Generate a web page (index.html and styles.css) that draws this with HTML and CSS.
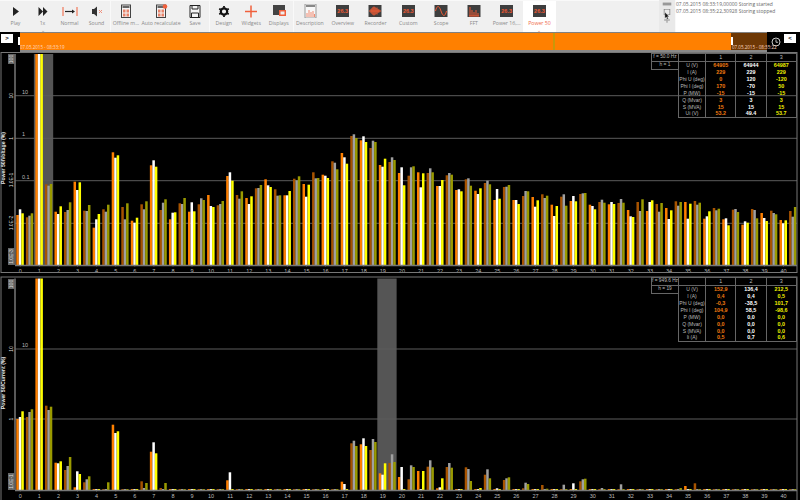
FILE: index.html
```html
<!DOCTYPE html>
<html lang="en">
<head>
<meta charset="utf-8">
<title>Power 50</title>
<link rel="stylesheet" href="styles.css">
</head>
<body>
<div class="toolbar">
  <div class="group">
    <div class="tool t27"><svg class="icon" viewBox="0 0 16 14"><path d="M5 3l6 4.500-6 4.500z" fill="#222"/></svg><span>Play</span></div>
    <div class="tool t27"><svg class="icon" viewBox="0 0 16 14"><path d="M3.500 3l4.500 4.500-4.500 4.500zM8 3l4.500 4.500L8 12z" fill="#222"/></svg><span>1x</span><i class="caret">⌄</i></div>
    <div class="tool t27"><svg class="icon" viewBox="0 0 16 14"><path d="M1 3v9M15 3v9" stroke="#f0603c" fill="none"/><path d="M3 7.500h8" stroke="#222" stroke-width="1.200"/><path d="M10 5.500l3 2-3 2z" fill="#222"/></svg><span>Normal</span></div>
    <div class="tool t27"><svg class="icon" viewBox="0 0 16 14"><path d="M3 5h2l3-2.500v10L5 10H3z" fill="#333"/><path d="M10 6l3 3M13 6l-3 3" stroke="#f0907c" fill="none"/></svg><span>Sound</span></div>
  </div>
  <div class="group">
    <div class="tool t30"><svg class="icon" viewBox="0 0 16 14"><rect x="3.500" y="1" width="9" height="12.500" fill="#f4f4f4" stroke="#444"/><path d="M4.500 2h7v2h-7z" fill="#666"/><path d="M5 5.500h2.500v3H5zM8.500 5.500H11v3H8.500zM5 9.500h2.500v3H5zM8.500 9.500H11v3H8.500z" fill="#e8836a"/></svg><span>Offline m...</span></div>
    <div class="tool t40"><svg class="icon" viewBox="0 0 16 14"><rect x="3.500" y="1" width="9" height="12.500" fill="#f4f4f4" stroke="#444"/><path d="M4.500 2h7v2h-7z" fill="#666"/><path d="M5 5.500h2.500v3H5zM8.500 5.500H11v3H8.500zM5 9.500h2.500v3H5zM8.500 9.500H11v3H8.500z" fill="#e8836a"/><circle cx="12" cy="2.500" r="2.300" fill="#f0603c"/></svg><span>Auto recalculate</span></div>
    <div class="tool t28"><svg class="icon" viewBox="0 0 16 14"><path d="M3 1.500h10v12H3z" fill="#f4f4f4" stroke="#222"/><path d="M5 1.500v3.500h6V1.500M4.500 13.500V9h7v4.500" fill="none" stroke="#222"/></svg><span>Save</span></div>
  </div>
  <div class="group">
    <div class="tool t275"><svg class="icon" viewBox="0 0 16 14"><circle cx="8" cy="7.500" r="3.200" fill="none" stroke="#111" stroke-width="2.200"/><path d="M8 2v11M3.200 4.750l9.600 5.500M12.800 4.750l-9.600 5.500" stroke="#111" stroke-width="1.800" stroke-dasharray="1.800 7.400"/></svg><span>Design</span></div>
    <div class="tool t275"><svg class="icon" viewBox="0 0 16 14"><path d="M8 1.500v12M2 7.500h12" stroke="#f0603c" stroke-width="1.500"/></svg><span>Widgets</span></div>
    <div class="tool t275"><svg class="icon" viewBox="0 0 16 14"><rect x="2" y="1" width="12" height="10" fill="#444"/><rect x="8" y="6" width="7" height="6" fill="#f0603c"/><rect x="9.500" y="7.500" width="4" height="3" fill="#eee"/></svg><span>Displays</span></div>
  </div>
  <div class="group grow">
    <div class="tool t327"><svg class="icon" viewBox="0 0 16 14"><rect x="3" y="0" width="11" height="14" fill="#f8f8f8" stroke="#999"/><rect x="4" y="1" width="9" height="2" fill="#888"/><path d="M5 13V9M7 13V6M9 13V8M11 13V7M12.500 13v-3" stroke="#f08a70"/></svg><span>Description</span></div>
    <div class="tool t327"><div class="lcd">26.3</div><span>Overview</span></div>
    <div class="tool t327"><svg class="icon" viewBox="0 0 16 14"><rect x="1.500" y="1" width="13" height="12" fill="#3e3e3e"/><path d="M2 7h12M4 5v4M5 4v6M6 3v8M7 2.500v9M8 3v8M9 4v6M10 3.500v7M11 5v4M12 5.500v3" stroke="#ee5a35"/></svg><span>Recorder</span></div>
    <div class="tool t327"><div class="lcd">26.3</div><span>Custom</span></div>
    <div class="tool t327"><svg class="icon" viewBox="0 0 16 14"><rect x="1.500" y="1" width="13" height="12" fill="#3e3e3e"/><path d="M2.500 7C4 1 6 1 8 7s4 6 5.500 0" fill="none" stroke="#ee5a35"/></svg><span>Scope</span></div>
    <div class="tool t327"><svg class="icon" viewBox="0 0 16 14"><rect x="1.500" y="1" width="13" height="12" fill="#3e3e3e"/><path d="M3 12h10M4 12V3M6 12V6M8 12V8M10 12V6M12 12V9" stroke="#ee5a35"/></svg><span>FFT</span></div>
    <div class="tool t327"><div class="lcd">26.3</div><span>Power 16,...</span></div>
    <div class="tool t327 active"><div class="lcd">26.3</div><span>Power 50</span><i class="caret">⌄</i></div>
  </div>
  <div class="side-icons">
    <svg class="side-icon" viewBox="0 0 14 6"><rect x="1" y="1" width="12" height="4" fill="#999"/></svg>
    <svg class="side-icon" viewBox="0 0 14 8"><rect x="3" y="0" width="8" height="8" fill="none" stroke="#777"/></svg>
    <svg class="side-icon" viewBox="0 0 14 8"><path d="M7 0v8M3 4h8" stroke="#aaa" stroke-width="2"/></svg>
  </div>
  <div class="log">
    <div>07.05.2015 08:33:19,00000 Storing started</div>
    <div>07.05.2015 08:35:22,30928 Storing stopped</div>
  </div>
</div>

<svg class="cursor" viewBox="0 0 8 11"><path d="M1 0v9l2-2 1.500 3 1.500-.7L4.500 6.500H7z" fill="#111" stroke="#fff" stroke-width=".5"/></svg>

<div class="timeline">
  <div class="nav-slot"><div class="nav-btn">&gt;</div></div>
  <div class="range">
    <span class="handle"></span>
    <span class="range-label">07.05.2015 - 08:33:19</span>
    <span class="marker"></span>
  </div>
  <div class="rest">
    <span class="handle"></span>
    <span class="rest-label">07.05.2015 - 08:35:22</span>
  </div>
  <div class="clock-slot">
    <svg class="clock" viewBox="0 0 12 12"><circle cx="6" cy="6" r="4.800" fill="none" stroke="#ddd" stroke-width="1.100"/><path d="M6 3v3.300h2.500" fill="none" stroke="#ddd"/></svg>
    <div class="nav-btn">&lt;</div>
  </div>
</div>

<div class="panel">
  <svg id="chart1" class="chart" viewBox="0 52 800 224"></svg>
  <table class="info">
    <tr class="head"><th class="key">f = 50.0 Hz</th><th class="blank"></th><th>1</th><th>2</th><th>3</th></tr>
    <tr><th class="key">h = 1</th><td class="name">U (V)</td><td class="p1">64905</td><td class="p2">64944</td><td class="p3">64987</td></tr>
    <tr><th class="none"></th><td class="name">I (A)</td><td class="p1">229</td><td class="p2">229</td><td class="p3">229</td></tr>
    <tr><th class="none"></th><td class="name">Phi U (deg)</td><td class="p1">0</td><td class="p2">120</td><td class="p3">-120</td></tr>
    <tr><th class="none"></th><td class="name">Phi I (deg)</td><td class="p1">170</td><td class="p2">-70</td><td class="p3">50</td></tr>
    <tr><th class="none"></th><td class="name">P (MW)</td><td class="p1">-15</td><td class="p2">-15</td><td class="p3">-15</td></tr>
    <tr><th class="none"></th><td class="name">Q (Mvar)</td><td class="p1">3</td><td class="p2">3</td><td class="p3">3</td></tr>
    <tr><th class="none"></th><td class="name">S (MVA)</td><td class="p1">15</td><td class="p2">15</td><td class="p3">15</td></tr>
    <tr class="last"><th class="none"></th><td class="name">Ui (V)</td><td class="p1">53.2</td><td class="p2">49.4</td><td class="p3">53.7</td></tr>
  </table>
</div>

<div class="panel">
  <svg id="chart2" class="chart" viewBox="0 276 800 224"></svg>
  <table class="info">
    <tr class="head"><th class="key">f = 949.6 Hz</th><th class="blank"></th><th>1</th><th>2</th><th>3</th></tr>
    <tr><th class="key">h = 19</th><td class="name">U (V)</td><td class="p1">152,9</td><td class="p2">136,4</td><td class="p3">212,5</td></tr>
    <tr><th class="none"></th><td class="name">I (A)</td><td class="p1">0,4</td><td class="p2">0,4</td><td class="p3">0,5</td></tr>
    <tr><th class="none"></th><td class="name">Phi U (deg)</td><td class="p1">-0,3</td><td class="p2">-38,5</td><td class="p3">101,7</td></tr>
    <tr><th class="none"></th><td class="name">Phi I (deg)</td><td class="p1">104,9</td><td class="p2">58,5</td><td class="p3">-98,6</td></tr>
    <tr><th class="none"></th><td class="name">P (MW)</td><td class="p1">0,0</td><td class="p2">0,0</td><td class="p3">0,0</td></tr>
    <tr><th class="none"></th><td class="name">Q (Mvar)</td><td class="p1">0,0</td><td class="p2">0,0</td><td class="p3">0,0</td></tr>
    <tr><th class="none"></th><td class="name">S (MVA)</td><td class="p1">0,0</td><td class="p2">0,0</td><td class="p3">0,0</td></tr>
    <tr class="last"><th class="none"></th><td class="name">Ii (A)</td><td class="p1">0,5</td><td class="p2">0,7</td><td class="p3">0,6</td></tr>
  </table>
</div>
<script src="chart.js"></script>
</body>
</html>
```
FILE: styles.css
```css
html, body { margin: 0; padding: 0; }
body {
  width: 800px; height: 500px; overflow: hidden; background: #000;
  font-family: "Open Sans", "Liberation Sans", sans-serif;
  display: flex; flex-direction: column; position: relative;
}
.toolbar { height: 32px; display: flex; background: #f9f9f9; flex: none; }
.group { display: flex; background: #f0f0f0; margin: 1px 1px 0 0; }
.group:first-child { padding-left: 2px; }
.group.grow { flex: 1; margin-right: 0; }
.tool { display: flex; flex-direction: column; align-items: center; position: relative; padding-top: 3px; box-sizing: border-box; color: #8a8a8a; font-size: 5.200px; line-height: 7px; white-space: nowrap; }
.tool span { margin-top: 2px; }
.t27 { width: 27px; }
.t28 { width: 28px; }
.t30 { width: 30px; }
.t40 { width: 40px; }
.t275 { width: 27.500px; }
.t327 { width: 32.800px; }
.active { background: #fff; color: #ef6a4a; }
.icon { width: 16px; height: 14px; display: block; }
.lcd { width: 13px; height: 12px; margin: 1px 0; background: #3e3e3e; color: #ee5a35; font: bold 5.500px/12px "Liberation Sans", sans-serif; text-align: center; overflow: hidden; }
.caret { position: absolute; left: 0; right: 0; bottom: -1px; text-align: center; font-style: normal; font-size: 5px; line-height: 5px; }
.side-icons { width: 16px; background: #e9e9e9; display: flex; flex-direction: column; align-items: center; gap: 2px; padding-top: 1px; }
.side-icon { width: 10px; height: 6px; display: block; }
.log { width: 124px; margin-left: 1px; background: #fff; color: #666; font-size: 4.950px; line-height: 6.600px; padding: 1px 0 0 0; box-sizing: border-box; white-space: nowrap; }
.cursor { position: absolute; left: 664px; top: 12px; width: 6px; height: 8px; }

.timeline { height: 20px; flex: none; display: flex; background: #000; }
.nav-slot { width: 20px; padding: 2px 0 0 1px; box-sizing: border-box; }
.nav-btn { width: 12px; height: 9px; background: #fff; color: #111; font: bold 6px/9px "Liberation Sans", sans-serif; text-align: center; }
.range { width: 711px; background: #ff8000; border-top: 1px solid #808080; border-bottom: 2px solid #888; position: relative; box-sizing: border-box; }
.handle { position: absolute; left: -2.500px; top: 4px; width: 2.500px; height: 8px; background: #fff; }
.range-label, .rest-label { position: absolute; bottom: 0; color: #ffd9c0; font-size: 4.500px; line-height: 5px; white-space: nowrap; }
.range-label { left: 0; }
.marker { position: absolute; left: 533px; top: 0; bottom: 0; width: 2px; background: #c8980a; }
.rest { width: 36px; background: #6e3804; border-top: 1px solid #808080; border-bottom: 2px solid #888; position: relative; box-sizing: border-box; }
.rest .handle { left: -.500px; }
.rest-label { left: 1px; }
.clock-slot { flex: 1; display: flex; align-items: flex-start; gap: 3px; padding: 2px 0 0 4px; }
.clock { width: 10px; height: 10px; display: block; margin-top: 3px; }

.panel { height: 224px; flex: none; position: relative; }
.chart { display: block; width: 800px; height: 224px; }
.grid { stroke: #5c5c5c; stroke-width: 1; }
.frame { stroke: #777; stroke-width: 1; fill: none; }
.axis { stroke: #777; stroke-width: 1.500; }
.band { fill: #555; }
.tick { fill: #bbb; font: 5.500px "Liberation Sans", sans-serif; text-anchor: middle; }
.val { fill: #bbb; font: 5.500px "Liberation Sans", sans-serif; }
.ylabel { fill: #e8e8e8; font: bold 5.200px "Liberation Sans", sans-serif; text-anchor: middle; }
.ybox { fill: #666; }
.yval { fill: #ddd; font: 5px "Liberation Sans", sans-serif; text-anchor: middle; }

.info { position: absolute; right: 3px; top: 1px; width: 146px; table-layout: fixed; border-collapse: collapse; font: bold 5.400px/6.800px "Liberation Sans", sans-serif; color: #fff; }
.info th, .info td { padding: 0; height: 6.800px; text-align: center; border-left: 1px solid #666; border-right: 1px solid #666; white-space: nowrap; }
.info .head th { border-top: 1px solid #666; border-bottom: 1px solid #666; color: #bbb; font-weight: normal; }
.info .key { width: 26px; border: 1px solid #666; color: #bbb; font-weight: normal; font-size: 4.800px; }
.info .blank { width: 26px; }
.info .none { border: 0; border-right: 1px solid #666; }
.info .name { width: 26px; color: #bbb; font-weight: normal; font-size: 5px; }
.info .last td { border-bottom: 1px solid #666; }
.p1 { color: #f07a10; }
.p2 { color: #fff; }
.p3 { color: #f0f000; }
```
FILE: chart.js
```js
var NS = 'http://www.w3.org/2000/svg';
var COLORS = ['#ff8000', '#ffffff', '#ffff00', '#a85400', '#a0a0a0', '#9a9a00'];
var OFFS = [-4, -1.5, 1, 5.6, 8, 10.4];
var T = -1; // bar reaches the very top
var z = -2; // tiny baseline bar

var d1 = [
[215,209.3,213.3,217.3,215.7,213.3],[T,T,T,184.3,185.7,184],[211.7,214,206.3,212,210,202.3],
[181.7,190,182.3,210.7,211,205],[227.7,219.3,214,209.3,211.7,204.7],[152.3,157.7,155.3,207,219.3,203.3],
[220.7,222.7,217.7,204.3,209.3,201.3],[165.3,160.3,166.7,210,202.7,199.3],[219.3,212.7,212.3,203.3,204,198],
[211.7,202.3,211.3,204.3,198.3,200],[195,206,207,205.3,204,201],[176,172.3,180.7,195,198.7,191.3],
[198,204,196.3,188.3,188,185],[179.3,185.3,187,189.3,195.7,195.3],[195.3,195.3,191,178.7,180.3,176.3],
[184,196.7,184.7,172.3,178.3,178],[174.7,175.7,178,161.3,162.7,169.3],[153,157.3,163.7,136,134.3,138],
[140.3,136.3,142,148,140.7,142],[165,166.7,158.7,162,157.3,160],[173,167.3,185.3,175.7,167.3,166.3],
[172.3,187.3,173.3,173,168.3,172.3],[186,186,180,175.3,173,174.7],[190,189.3,191.3,179.3,178.3,185.7],
[190.7,194,188.3,183,180.7,184.3],[200,189,198.7,187,186.7,185],[200,200,204,196,191,191.3],
[197,206.7,200.3,194.3,198,195.7],[204.7,216,206,196.7,194.3,205.7],[201,196,201.3,194,193.3,193],
[204.7,206,209.3,202,199.7,202.7],[204.3,202,204,203,199,202.7],[210,216.3,217,202,211,199.3],
[211,202,200.3,204,211.7,203],[208,219,210.3,201.3,205.7,202],[202,218.7,203.7,201,204.7,202.7],
[218.7,216.3,211.3,208,210.3,208.7],[219.3,218.3,225.3,209.7,209,212],[224.7,221.3,222.7,209,210,218.3],
[213,218,221,210.7,213,214.3],[220,223.3,220.3,211,216.7,207]
];
var d2 = [
[419,417,411.3,417,412,409.3],[T,T,T,405.7,410,406.7],[462.7,463.3,461.3,470,466,457],
[487.3,471.3,474,482.3,479.3,476.3],[z,z,z,z,z,482.3],[424.7,433,431.3,z,z,z],
[z,z,z,481.3,488,483],[451.7,442.3,453.3,488,z,483],[z,z,z,z,z,z],[z,z,z,z,z,z],[z,z,z,z,z,z],
[480.3,472.3,z,z,z,z],[z,z,z,z,z,z],[z,z,z,z,z,z],[z,z,z,z,z,z],[z,z,z,z,z,z],[z,z,z,z,z,z],
[481.7,484,z,443.3,440.7,446],[444.3,438.3,446,450,439,442],[473.3,474.7,463.3,463,454.3,462],
[477,467,z,479.3,465.3,467],[471,z,471,466.7,460.3,467.3],[488.3,487.3,478.3,467,463,467.7],
[z,z,z,467.3,469,481],[z,z,488,474.7,469.3,478.3],[z,488.3,z,480,478.3,477.3],[z,z,z,488.3,482.7,484],
[z,z,z,485,z,488.7],[z,z,z,z,484.7,z],[z,483.3,z,481.3,479.3,478.7],[z,z,z,z,488,z],[z,z,z,z,484.3,z],
[z,z,z,z,z,z],[z,z,z,z,z,z],[z,z,z,z,z,488],[486,z,z,483.3,z,z],[z,z,z,z,z,z],[z,z,z,z,z,z],
[z,z,z,z,z,z],[z,z,z,z,z,z],[z,z,z,z,z,z]
];

function el(parent, name, attrs, text) {
  var n = document.createElementNS(NS, name);
  for (var k in attrs) n.setAttribute(k, attrs[k]);
  if (text !== undefined) n.textContent = text;
  parent.appendChild(n);
  return n;
}

function drawChart(id, c) {
  var s = document.getElementById(id);
  var tickX = function (h) { return 20.3 + 19.08 * h; };
  // selection band
  var bx = tickX(c.sel) - 5.5;
  el(s, 'rect', {'class': 'band', x: bx, y: c.top, width: 19.3, height: c.bottom - c.top});
  // grid
  c.grid.forEach(function (g) {
    el(s, 'line', {'class': 'grid', x1: 15, x2: 797, y1: g[0], y2: g[0]});
    if (g[1]) el(s, 'text', {'class': 'val', x: 22, y: g[0] - 2}, g[1]);
  });
  // bars
  c.data.forEach(function (row, h) {
    row.forEach(function (v, i) {
      var top = v === T ? c.top : (v === z ? c.bottom - 1 : v);
      el(s, 'rect', {x: tickX(h) + OFFS[i], y: top, width: 2.5, height: c.bottom - top, fill: COLORS[i]});
    });
    el(s, 'text', {'class': 'tick', x: tickX(h), y: c.bottom + 7.5}, h);
    el(s, 'line', {'class': 'grid', x1: tickX(h), x2: tickX(h), y1: c.bottom, y2: c.bottom + 1.5});
  });
  // frame
  el(s, 'line', {'class': 'axis', x1: 15, x2: 15, y1: c.top, y2: c.bottom});
  el(s, 'line', {'class': 'axis', x1: 15, x2: 797, y1: c.bottom + .5, y2: c.bottom + .5});
  el(s, 'rect', {'class': 'frame', x: 1, y: c.top - 1.5, width: 796, height: c.frameH});
  // y axis labels
  c.ybox.forEach(function (b) {
    el(s, 'rect', {'class': 'ybox', x: 8, y: b[0], width: 6.5, height: b[1]});
  });
  c.yvals.forEach(function (v) {
    el(s, 'text', {'class': 'yval', x: 0, y: 0, transform: 'translate(13,' + v[0] + ') rotate(-90)'}, v[1]);
  });
  el(s, 'text', {'class': 'ylabel', transform: 'translate(5,' + c.labelY + ') rotate(-90)'}, c.label);
}

drawChart('chart1', {
  top: 54, bottom: 265, sel: 1, data: d1, frameH: 220,
  grid: [[95.7, '10'], [138.3, '1'], [180.7, '0.1'], [223.3, '']],
  ybox: [[54, 10], [248, 17]],
  yvals: [[59, '100'], [95.7, '10'], [138.3, '1'], [180, '1.0E-1'], [223, '1.0E-2'], [256.5, '1.0E-3']],
  label: 'Power 50/Voltage (%)', labelY: 158
});
drawChart('chart2', {
  top: 278.500, bottom: 490, sel: 19, data: d2, frameH: 240,
  grid: [[349, '10'], [419, '']],
  ybox: [[279, 10], [473, 17]],
  yvals: [[284, '100'], [349, '10'], [419, '1'], [481.5, '1.0E-1']],
  label: 'Power 50/Current (%)', labelY: 383
});
```
